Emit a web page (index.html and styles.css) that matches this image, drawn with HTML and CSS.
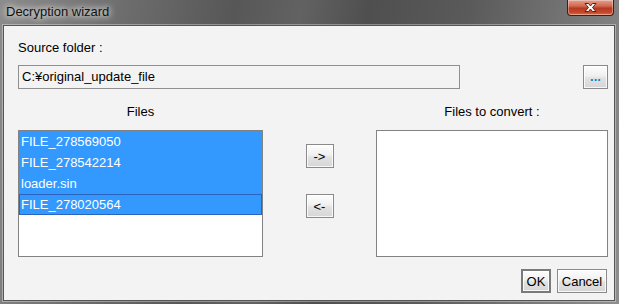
FILE: index.html
```html
<!DOCTYPE html>
<html lang="en">
<head>
    <meta charset="UTF-8">
    <title>Decryption wizard</title>
    <link rel="stylesheet" href="styles.css">
</head>
<body>

    <div class="window">
        <div class="titlebar">
            <span class="title">Decryption wizard</span>
            <div class="close-btn">
                <svg width="19" height="11" viewBox="0 0 19 11">
                    <path d="M4 1.5h3.5l2 2.5 2-2.5H15l-3.5 4 3.5 4h-3.5l-2-2.5-2 2.5H4l3.5-4z" fill="#fff" stroke="#5a2016" stroke-width="1" stroke-linejoin="round"/>
                </svg>
            </div>
        </div>

        <div class="client">
            <div class="field-label">Source folder :</div>
            <div class="path-row">
                <div class="path-field">C:¥original_update_file</div>
                <button class="btn btn-browse">...</button>
            </div>

            <div class="lists">
                <div class="col-head">Files</div>
                <div></div>
                <div class="col-head">Files to convert :</div>

                <ul class="listbox">
                    <li class="selected">FILE_278569050</li>
                    <li class="selected">FILE_278542214</li>
                    <li class="selected">loader.sin</li>
                    <li class="selected focused">FILE_278020564</li>
                </ul>

                <div class="movers">
                    <button class="btn btn-move">-&gt;</button>
                    <button class="btn btn-move">&lt;-</button>
                </div>

                <ul class="listbox"></ul>
            </div>

            <div class="footer">
                <button class="btn btn-default">OK</button>
                <button class="btn btn-cancel">Cancel</button>
            </div>
        </div>
    </div>

</body>
</html>
```

FILE: styles.css
```css
body {
    margin: 0;
    font-family: "Liberation Sans", Arial, sans-serif;
    font-size: 13px;
}
.window {
    width: 619px;
    height: 304px;
    box-sizing: border-box;
    padding: 0 4px 3px 3px;
    background: linear-gradient(100deg, #8c8c8c 0%, #6e6e6e 18%, #575757 35%, #626262 45%, #4f4f4f 55%, #5a5a5a 70%, #7a7a7a 88%, #8e8e8e 100%);
}
.titlebar {
    height: 25px;
    display: flex;
    justify-content: space-between;
    align-items: flex-start;
}
.title {
    padding: 4px 0 0 3px;
    line-height: 16px;
    color: #111;
    text-shadow: 0 0 6px #fff, 0 0 8px rgba(255, 255, 255, 0.8);
}
.close-btn {
    width: 45px;
    height: 15px;
    margin-right: 1px;
    border: 1px solid #4a1a12;
    border-top: none;
    border-radius: 0 0 4px 4px;
    background: linear-gradient(#e3a08e 0%, #d06a52 40%, #b73a20 55%, #c8482c 85%, #dc7a5c 100%);
    box-shadow: inset 0 0 0 1px rgba(255, 255, 255, 0.35);
    display: flex;
    justify-content: center;
    align-items: center;
}
.client {
    height: 276px;
    box-sizing: border-box;
    border: 1px solid #555;
    box-shadow: 0 0 0 1px rgba(255, 255, 255, 0.35);
    background-color: #f3f3f3;
    padding: 13px 6px 7px 14px;
}
.field-label {
    line-height: 18px;
    color: #000;
}
.path-row {
    display: flex;
    justify-content: space-between;
    margin-top: 8px;
}
.path-field {
    width: 442px;
    height: 24px;
    box-sizing: border-box;
    border: 1px solid #909090;
    padding-left: 3px;
    line-height: 22px;
    color: #000;
}
.btn {
    font-family: "Liberation Sans", Arial, sans-serif;
    font-size: 13px;
    height: 24px;
    padding: 0;
    box-sizing: border-box;
    border: 1px solid #8a8a8a;
    background: linear-gradient(#fdfdfd 0%, #f0f0f0 45%, #e2e2e2 55%, #d6d6d6 100%);
    box-shadow: inset 0 0 0 1px rgba(255, 255, 255, 0.8);
    color: #000;
}
.btn-browse {
    width: 25px;
    color: #1a7fc0;
    font-weight: bold;
    line-height: 18px;
}
.lists {
    display: grid;
    grid-template-columns: 245px 113px 232px;
    grid-template-rows: 18px 127px;
    row-gap: 9px;
    margin-top: 14px;
}
.col-head {
    text-align: center;
    line-height: 18px;
}
.listbox {
    list-style: none;
    margin: 0;
    padding: 0;
    border: 1px solid #828282;
    background-color: #fff;
}
.listbox li {
    height: 21px;
    box-sizing: border-box;
    line-height: 21px;
    padding-left: 2px;
}
.listbox .selected {
    background-color: #3399ff;
    color: #fff;
}
.listbox .focused {
    border: 1px solid #2a64c0;
    line-height: 19px;
    padding-left: 1px;
}
.movers {
    display: flex;
    flex-direction: column;
    align-items: center;
    gap: 26px;
    padding-top: 14px;
}
.btn-move {
    width: 28px;
}
.footer {
    display: flex;
    justify-content: flex-end;
    gap: 6px;
    margin-top: 12px;
    padding-right: 1px;
}
.btn-default {
    width: 30px;
    border: 2px solid #7a7a7a;
}
.btn-cancel {
    width: 50px;
}
```
